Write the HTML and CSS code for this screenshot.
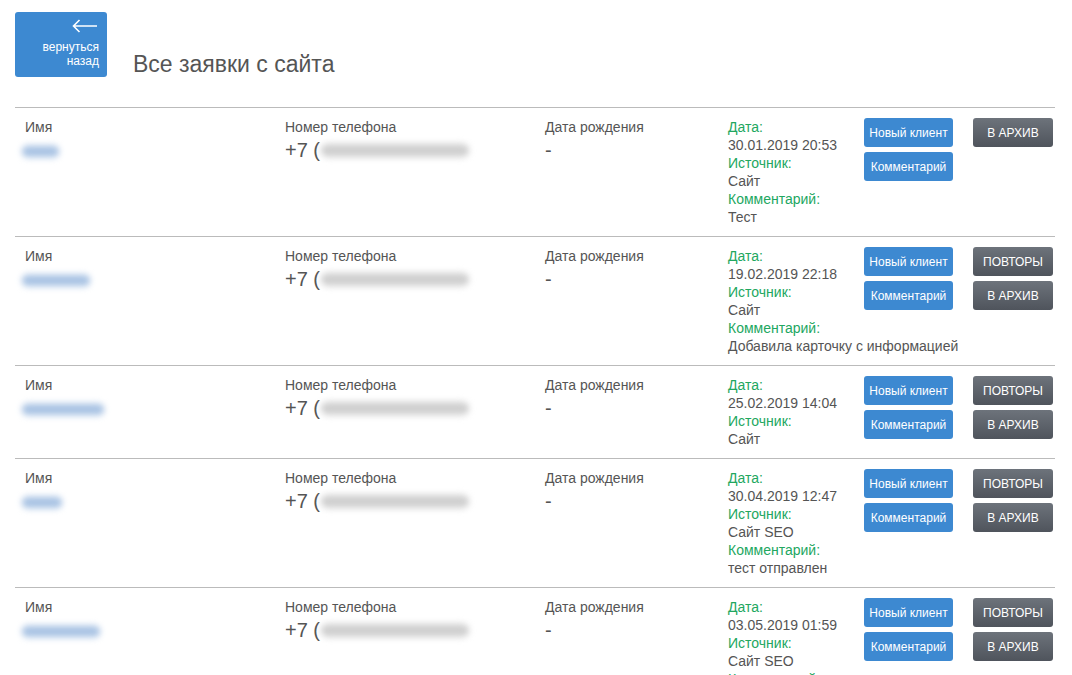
FILE: index.html
```html
<!DOCTYPE html>
<html lang="ru">
<head>
    <meta charset="UTF-8">
    <meta name="viewport" content="width=device-width, initial-scale=1.0">
    <title>Все заявки с сайта</title>
    <link rel="stylesheet" href="styles.css">
</head>
<body>
    <div class="page">
        <div class="header">
            <a class="back-btn" href="#">
                <svg class="back-arrow" width="26" height="14" viewBox="0 0 26 14">
                    <path d="M25 7H1.5M7.5 1L1.5 7L7.5 13" fill="none" stroke="#fff" stroke-width="1.6"/>
                </svg>
                <span>вернуться<br>назад</span>
            </a>
            <h1>Все заявки с сайта</h1>
        </div>

        <div class="orders">
            <div class="order">
                <div class="col">
                    <div class="label">Имя</div>
                    <div class="hidden-name" style="width:37px"></div>
                </div>
                <div class="col">
                    <div class="label">Номер телефона</div>
                    <div class="phone">+7 (<span class="hidden-phone"></span></div>
                </div>
                <div class="col">
                    <div class="label">Дата рождения</div>
                    <div class="birth">-</div>
                </div>
                <div class="info">
                    <div class="key">Дата:</div>
                    <div>30.01.2019 20:53</div>
                    <div class="key">Источник:</div>
                    <div>Сайт</div>
                    <div class="key">Комментарий:</div>
                    <div>Тест</div>
                </div>
                <div class="btns">
                    <button class="btn btn-blue">Новый клиент</button>
                    <button class="btn btn-blue">Комментарий</button>
                </div>
                <div class="btns">
                    <button class="btn btn-gray">В архив</button>
                </div>
            </div>

            <div class="order">
                <div class="col">
                    <div class="label">Имя</div>
                    <div class="hidden-name" style="width:68px"></div>
                </div>
                <div class="col">
                    <div class="label">Номер телефона</div>
                    <div class="phone">+7 (<span class="hidden-phone"></span></div>
                </div>
                <div class="col">
                    <div class="label">Дата рождения</div>
                    <div class="birth">-</div>
                </div>
                <div class="info">
                    <div class="key">Дата:</div>
                    <div>19.02.2019 22:18</div>
                    <div class="key">Источник:</div>
                    <div>Сайт</div>
                    <div class="key">Комментарий:</div>
                    <div>Добавила карточку с информацией</div>
                </div>
                <div class="btns">
                    <button class="btn btn-blue">Новый клиент</button>
                    <button class="btn btn-blue">Комментарий</button>
                </div>
                <div class="btns">
                    <button class="btn btn-gray">Повторы</button>
                    <button class="btn btn-gray">В архив</button>
                </div>
            </div>

            <div class="order">
                <div class="col">
                    <div class="label">Имя</div>
                    <div class="hidden-name" style="width:82px"></div>
                </div>
                <div class="col">
                    <div class="label">Номер телефона</div>
                    <div class="phone">+7 (<span class="hidden-phone"></span></div>
                </div>
                <div class="col">
                    <div class="label">Дата рождения</div>
                    <div class="birth">-</div>
                </div>
                <div class="info">
                    <div class="key">Дата:</div>
                    <div>25.02.2019 14:04</div>
                    <div class="key">Источник:</div>
                    <div>Сайт</div>
                </div>
                <div class="btns">
                    <button class="btn btn-blue">Новый клиент</button>
                    <button class="btn btn-blue">Комментарий</button>
                </div>
                <div class="btns">
                    <button class="btn btn-gray">Повторы</button>
                    <button class="btn btn-gray">В архив</button>
                </div>
            </div>

            <div class="order">
                <div class="col">
                    <div class="label">Имя</div>
                    <div class="hidden-name" style="width:40px"></div>
                </div>
                <div class="col">
                    <div class="label">Номер телефона</div>
                    <div class="phone">+7 (<span class="hidden-phone"></span></div>
                </div>
                <div class="col">
                    <div class="label">Дата рождения</div>
                    <div class="birth">-</div>
                </div>
                <div class="info">
                    <div class="key">Дата:</div>
                    <div>30.04.2019 12:47</div>
                    <div class="key">Источник:</div>
                    <div>Сайт SEO</div>
                    <div class="key">Комментарий:</div>
                    <div>тест отправлен</div>
                </div>
                <div class="btns">
                    <button class="btn btn-blue">Новый клиент</button>
                    <button class="btn btn-blue">Комментарий</button>
                </div>
                <div class="btns">
                    <button class="btn btn-gray">Повторы</button>
                    <button class="btn btn-gray">В архив</button>
                </div>
            </div>

            <div class="order">
                <div class="col">
                    <div class="label">Имя</div>
                    <div class="hidden-name" style="width:78px"></div>
                </div>
                <div class="col">
                    <div class="label">Номер телефона</div>
                    <div class="phone">+7 (<span class="hidden-phone"></span></div>
                </div>
                <div class="col">
                    <div class="label">Дата рождения</div>
                    <div class="birth">-</div>
                </div>
                <div class="info">
                    <div class="key">Дата:</div>
                    <div>03.05.2019 01:59</div>
                    <div class="key">Источник:</div>
                    <div>Сайт SEO</div>
                    <div class="key">Комментарий:</div>
                    <div>тест</div>
                </div>
                <div class="btns">
                    <button class="btn btn-blue">Новый клиент</button>
                    <button class="btn btn-blue">Комментарий</button>
                </div>
                <div class="btns">
                    <button class="btn btn-gray">Повторы</button>
                    <button class="btn btn-gray">В архив</button>
                </div>
            </div>
        </div>
    </div>
</body>
</html>
```

FILE: styles.css
```css
body {
    margin: 0;
    font-family: "Liberation Sans", Arial, sans-serif;
    color: #444;
    background: #fff;
}

.page {
    padding: 12px 17px 0 15px;
}

/* header: back button + page title */
.header {
    display: flex;
    align-items: flex-end;
    gap: 26px;
    margin-bottom: 30px;
}

.back-btn {
    display: flex;
    flex-direction: column;
    align-items: flex-end;
    width: 92px;
    height: 65px;
    box-sizing: border-box;
    padding: 7px 8px 0 0;
    background: #3d89d1;
    border-radius: 3px;
    color: #fff;
    text-decoration: none;
    font-size: 12px;
    line-height: 14px;
    text-align: right;
}

.back-arrow {
    display: block;
    margin: 0 1px 7px 0;
}

.header h1 {
    margin: 0;
    font-size: 23px;
    line-height: 24px;
    font-weight: normal;
    color: #555;
    position: relative;
    top: -1px;
}

/* orders list */
.orders {
    border-top: 1px solid #bbb;
}

.order {
    display: grid;
    grid-template-columns: 260px 260px 183px 136px 109px 1fr;
    padding: 10px 0 10px 10px;
    border-bottom: 1px solid #bbb;
    font-size: 14px;
    line-height: 18px;
}

.label {
    color: #555;
}

.phone,
.birth {
    font-size: 20px;
    line-height: 28px;
    color: #555;
    white-space: nowrap;
}

/* personal data is smudged out */
.hidden-name {
    height: 13px;
    margin: 9px 0 0 -3px;
    background: linear-gradient(to bottom, #c4d6ec, #9dbbe0 50%, #c9daee);
    border-radius: 6px;
    filter: blur(3px);
}

.hidden-phone {
    display: inline-block;
    width: 148px;
    height: 15px;
    margin-left: 1px;
    background: linear-gradient(to bottom, #e2e2e2, #c8c8c8 50%, #e4e4e4);
    border-radius: 8px;
    filter: blur(3px);
    vertical-align: -1px;
}

.info {
    white-space: nowrap;
    color: #555;
}

.info .key {
    color: #22a75f;
}

.btns {
    display: flex;
    flex-direction: column;
    align-items: flex-start;
    gap: 5px;
}

.btn {
    height: 29px;
    padding: 0;
    border: none;
    border-radius: 3px;
    color: #fff;
    font-family: inherit;
    font-size: 12px;
    cursor: pointer;
}

.btn-blue {
    width: 89px;
    background: #3d89d1;
}

.btn-gray {
    width: 80px;
    background: linear-gradient(to bottom, #6d737b, #4f545c);
    text-transform: uppercase;
}
```
